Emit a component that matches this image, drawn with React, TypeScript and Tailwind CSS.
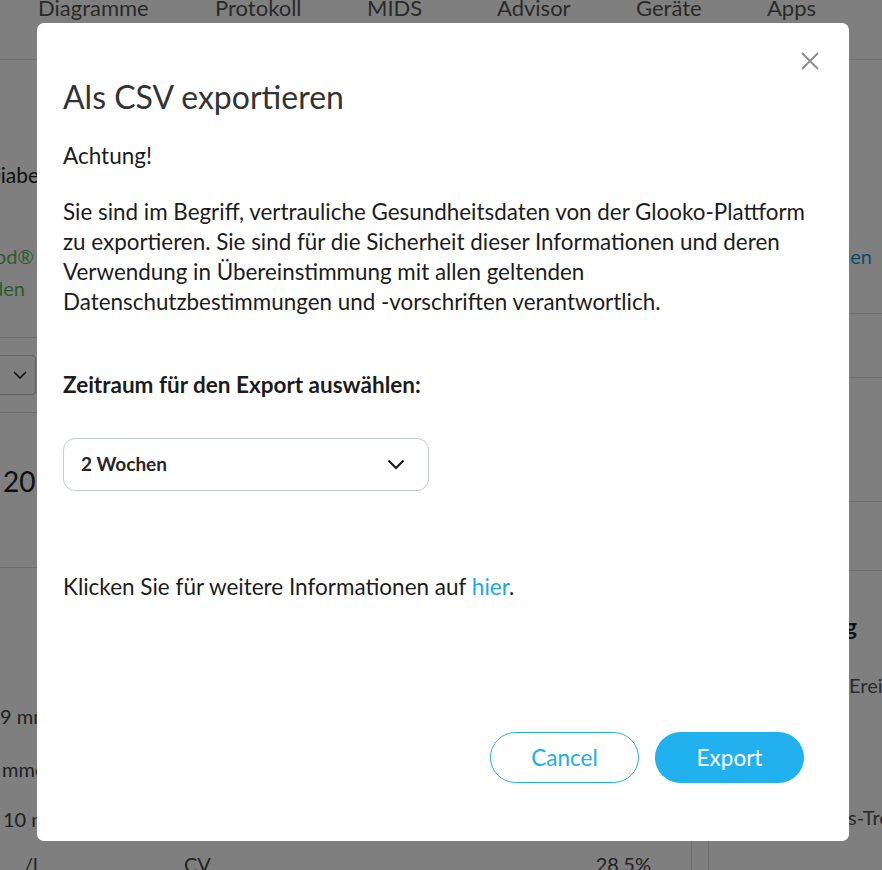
import { useState } from 'react'

const navItems = [
  { label: 'Diagramme', w: 'w-[177px]' },
  { label: 'Protokoll', w: 'w-[152px]' },
  { label: 'MIDS', w: 'w-[130px]' },
  { label: 'Advisor', w: 'w-[139px]' },
  { label: 'Geräte', w: 'w-[131px]' },
  { label: 'Apps', w: 'w-[80px]' },
]

// Page behind the dialog, only its edges stay visible
function BackgroundPage() {
  return (
    <div className="h-[870px] w-[882px] overflow-hidden bg-white font-['Lato',sans-serif] text-[#555]">
      <nav className="flex h-[60px] border-b border-[#e2e2e2] pl-[38px]">
        {navItems.map(item => (
          <div key={item.label} className={`${item.w} -mt-[4px] text-[22px] leading-[24px] text-[#555]`}>
            {item.label}
          </div>
        ))}
      </nav>

      <div className="flex">
        {/* left column */}
        <div className="w-[441px] shrink-0">
          <div className="pt-[101px]">
            <div className="-ml-[15px] whitespace-nowrap text-[21px] leading-[28px] text-[#222]">
              Diabetes-Typ 1
            </div>
          </div>
          <div className="mt-[51px] flex w-[34px] flex-col items-end text-[20px] leading-[32px] text-[#5cb85c]">
            <span className="whitespace-nowrap">Omnipod®</span>
            <span className="mr-[9px] whitespace-nowrap">hochladen</span>
          </div>
          <div className="h-[34px] border-b border-[#dcdcdc]" />
          <div className="border-b border-[#dcdcdc] py-[17px]">
            <div className="flex h-[40px] w-[36px] items-center justify-end rounded-r-[4px] border border-l-0 border-[#c8c8c8] pr-[8px]">
              <svg width="14" height="8" viewBox="0 0 14 8" fill="none">
                <path d="M1 1l6 6 6-6" stroke="#222" strokeWidth="1.6" />
              </svg>
            </div>
          </div>
          <div className="h-[155px] border-b border-[#dcdcdc] pl-[3px] pt-[52px] text-[28px] leading-[32px] text-[#222]">
            <span className="whitespace-nowrap">2024 – 25.11.2024</span>
          </div>
        </div>

        {/* right column */}
        <div className="min-w-0 flex-1">
          <div className="h-[180px]" />
          <div className="flex justify-end pr-[10px] text-[20px] leading-[32px] text-[#1b9ad6]">
            <span className="whitespace-nowrap">Verbinden</span>
          </div>
          <div className="h-[42px] border-b border-[#dcdcdc]" />
          <div className="h-[64px] border-b border-[#dcdcdc]" />
          <div className="h-[124px] border-b border-[#dcdcdc]" />
          <div className="h-[69px] border-b border-[#dcdcdc]" />
        </div>
      </div>

      <div className="flex">
        <div className="w-[692px] shrink-0 border-r border-[#dcdcdc] text-[20px] leading-[28px] text-[#444]">
          <div className="h-[131px]" />
          <div className="whitespace-nowrap">9 mmol/L</div>
          <div className="mt-[25px] whitespace-nowrap pl-[2px]">mmol/L</div>
          <div className="mt-[22px] whitespace-nowrap pl-[3px]">10 mmol/L</div>
          <div className="mt-[17px] flex items-start pl-[24px] pr-[40px]">
            <span className="w-[160px]">/l</span>
            <span className="flex-1">CV</span>
            <span>28,5%</span>
          </div>
        </div>
        <div className="ml-[16px] min-w-0 flex-1 overflow-hidden border-l border-[#dcdcdc]">
          <div className="h-[42px]" />
          <div className="flex justify-end pr-[25px] text-[22px] font-bold leading-[28px] text-[#222]">
            <span className="whitespace-nowrap">Verteilung</span>
          </div>
          <div className="mt-[30px] whitespace-nowrap pl-[140px] text-[20px] leading-[28px] text-[#555]">
            Ereignisse
          </div>
          <div className="mt-[104px] whitespace-nowrap pl-[139px] text-[20px] leading-[28px] text-[#555]">
            s-Trends
          </div>
        </div>
      </div>
    </div>
  )
}

function ExportDialog() {
  const [range] = useState('2 Wochen')

  return (
    <div className="fixed inset-0 flex items-start bg-black/50 pl-[37px] pt-[23px]">
      <div className="relative flex h-[818px] w-[812px] flex-col rounded-[7px] bg-white px-[26px] pb-[58px] pt-[56px] font-['Lato',sans-serif] text-[#1c1c1c]">
        <button className="absolute right-[28px] top-[27px] p-[1px]" aria-label="Schließen">
          <svg width="20" height="20" viewBox="0 0 20 20" fill="none">
            <path d="M2 2l16 16M18 2L2 18" stroke="#8a8a8a" strokeWidth="1.8" />
          </svg>
        </button>

        <h1 className="text-[32px] leading-[36px] text-[#333]">Als CSV exportieren</h1>

        <p className="mt-[26px] text-[22.5px] leading-[30px]">Achtung!</p>

        <p className="mt-[26px] text-[22.4px] leading-[30px]">
          Sie sind im Begriff, vertrauliche Gesundheitsdaten von der Glooko-Plattform zu exportieren. Sie sind
          für die Sicherheit dieser Informationen und deren Verwendung in Übereinstimmung mit allen geltenden
          Datenschutzbestimmungen und -vorschriften verantwortlich.
        </p>

        <p className="mt-[53px] text-[22.5px] font-bold leading-[30px]">Zeitraum für den Export auswählen:</p>

        <button className="mt-[38px] flex h-[53px] w-[366px] items-center justify-between rounded-[12px] border border-[#c3cbd3] pl-[17px] pr-[23px] text-left">
          <span className="text-[19px] font-bold text-[#262626]">{range}</span>
          <svg width="18" height="11" viewBox="0 0 18 11" fill="none">
            <path d="M1.5 1.5l7.5 7.5 7.5-7.5" stroke="#1c1c1c" strokeWidth="2.2" />
          </svg>
        </button>

        <p className="mt-[81px] text-[22.5px] leading-[30px]">
          Klicken Sie für weitere Informationen auf <span className="text-[#1ba8e6]">hier</span>.
        </p>

        <div className="mt-auto flex justify-end gap-[16px] pr-[19px]">
          <button className="h-[51px] w-[149px] rounded-full border border-[#20aeeb] text-[22.5px] text-[#20aeeb]">
            Cancel
          </button>
          <button className="h-[51px] w-[149px] rounded-full bg-[#21b1ee] text-[22.5px] text-white">
            Export
          </button>
        </div>
      </div>
    </div>
  )
}

export default function App() {
  return (
    <div className="relative h-[870px] w-[882px] overflow-hidden">
      <BackgroundPage />
      <ExportDialog />
    </div>
  )
}
